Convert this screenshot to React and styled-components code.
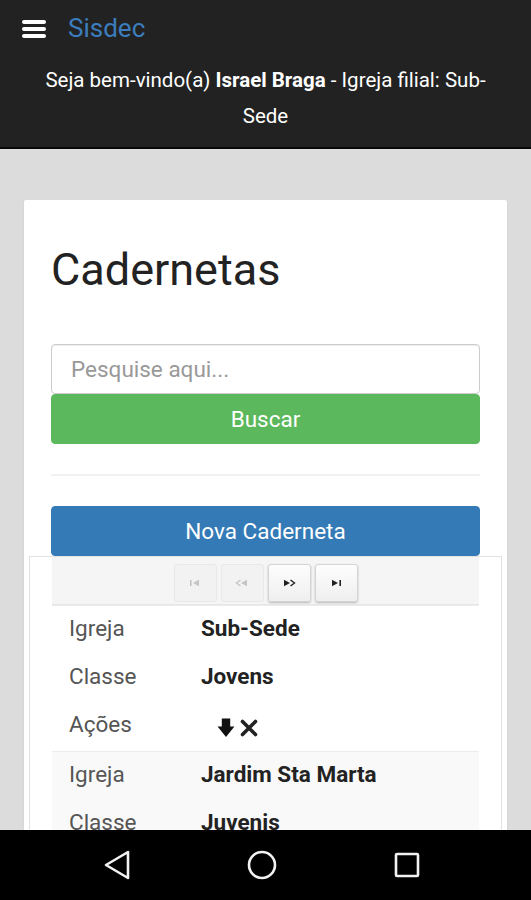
import React from 'react'
import styled, { createGlobalStyle } from 'styled-components'

const GlobalStyle = createGlobalStyle`
  * { box-sizing: border-box; }
  body {
    margin: 0;
    background: #dcdcdc;
    font-family: Roboto, "Noto Sans", "Liberation Sans", sans-serif;
  }
`

const records = [
  { igreja: 'Sub-Sede', classe: 'Jovens' },
  { igreja: 'Jardim Sta Marta', classe: 'Juvenis' },
  { igreja: 'Sub-Sede', classe: 'Adolescentes' },
]

const App = () => {
  return (
    <Screen>
      <GlobalStyle />
      <Header>
        <TopBar>
          <Burger>
            <span />
            <span />
            <span />
          </Burger>
          <Brand>Sisdec</Brand>
        </TopBar>
        <Welcome>
          Seja bem-vindo(a) <b>Israel Braga</b> - Igreja filial: Sub-Sede
        </Welcome>
      </Header>

      <Main>
        <Card>
          <Title>Cadernetas</Title>
          <SearchInput placeholder="Pesquise aqui..." />
          <Button color="#5cb85c">Buscar</Button>
          <Divider />
          <Button color="#337ab7">Nova Caderneta</Button>

          <TableBox>
            <Pager>
              <PageBtn disabled>
                <svg width="12" height="8" viewBox="0 0 12 8">
                  <rect x="1" y="1" width="1.6" height="6" fill="currentColor" />
                  <path d="M4 4 L10 0.8 V7.2 Z" fill="currentColor" />
                </svg>
              </PageBtn>
              <PageBtn disabled>
                <svg width="14" height="8" viewBox="0 0 14 8">
                  <path d="M5.5 1 L1.5 4 L5.5 7" stroke="currentColor" strokeWidth="1.4" fill="none" />
                  <path d="M6 4 L12 0.8 V7.2 Z" fill="currentColor" />
                </svg>
              </PageBtn>
              <PageBtn>
                <svg width="14" height="8" viewBox="0 0 14 8">
                  <path d="M8 4 L2 0.8 V7.2 Z" fill="currentColor" />
                  <path d="M8.5 1 L12.5 4 L8.5 7" stroke="currentColor" strokeWidth="1.4" fill="none" />
                </svg>
              </PageBtn>
              <PageBtn>
                <svg width="12" height="8" viewBox="0 0 12 8">
                  <path d="M8 4 L2 0.8 V7.2 Z" fill="currentColor" />
                  <rect x="9.4" y="1" width="1.6" height="6" fill="currentColor" />
                </svg>
              </PageBtn>
            </Pager>

            {records.map((r, i) => (
              <Record key={i} striped={i % 2 === 1}>
                <Row>
                  <Label>Igreja</Label>
                  <Value>{r.igreja}</Value>
                </Row>
                <Row>
                  <Label>Classe</Label>
                  <Value>{r.classe}</Value>
                </Row>
                <Row>
                  <Label>Ações</Label>
                  <Actions>
                    <svg width="18" height="20" viewBox="0 0 17 19">
                      <path d="M4.5 0.5 H12.5 V8 H16.5 L8.5 18 L0.5 8 H4.5 Z" fill="#111" />
                    </svg>
                    <svg width="20" height="20" viewBox="0 0 20 20">
                      <path d="M3.5 3.5 L16.5 16.5 M16.5 3.5 L3.5 16.5" stroke="#222" strokeWidth="3.6" strokeLinecap="round" />
                    </svg>
                  </Actions>
                </Row>
              </Record>
            ))}
          </TableBox>
        </Card>
      </Main>

      <NavBar>
        <svg width="26" height="30" viewBox="0 0 26 30">
          <path d="M24 2 V28 L2 15 Z" stroke="#f2f2f2" strokeWidth="2.6" fill="none" strokeLinejoin="round" />
        </svg>
        <svg width="30" height="30" viewBox="0 0 30 30">
          <circle cx="15" cy="15" r="13" stroke="#f2f2f2" strokeWidth="2.6" fill="none" />
        </svg>
        <svg width="26" height="26" viewBox="0 0 26 26">
          <rect x="2" y="2" width="22" height="22" rx="1" stroke="#f2f2f2" strokeWidth="2.6" fill="none" />
        </svg>
      </NavBar>
    </Screen>
  )
}

const Screen = styled.div`
  height: 900px;
  display: flex;
  flex-direction: column;
  overflow: hidden;
`

const Header = styled.header`
  background: #222;
  border-bottom: 2px solid #080808;
  height: 149px;
  flex-shrink: 0;
`

const TopBar = styled.div`
  height: 56px;
  display: flex;
  align-items: center;
  padding-left: 22px;
`

const Burger = styled.div`
  width: 24px;
  display: flex;
  flex-direction: column;
  gap: 3px;
  margin-top: 2px;
  span {
    display: block;
    height: 4px;
    border-radius: 2px;
    background: #fff;
  }
`

const Brand = styled.div`
  margin-left: 22px;
  color: #3b7dbd;
  font-size: 26px;
  line-height: 1;
`

const Welcome = styled.div`
  color: #fff;
  font-size: 20.5px;
  line-height: 36px;
  text-align: center;
  padding: 6px 34px 0;
  b {
    font-weight: 700;
  }
`

const Main = styled.main`
  flex: 1;
  overflow: hidden;
  padding: 51px 24px 0;
`

const Card = styled.section`
  background: #fff;
  border-radius: 2px;
  box-shadow: 0 1px 2px rgba(0, 0, 0, 0.08);
  padding: 22px 27px 30px;
`

const Title = styled.h1`
  margin: 22px 0 48px;
  font-size: 45px;
  font-weight: 400;
  line-height: 52px;
  color: #222;
`

const SearchInput = styled.input`
  display: block;
  width: 100%;
  height: 50px;
  border: 1px solid #ccc;
  border-radius: 4px;
  padding: 0 19px;
  font-family: inherit;
  font-size: 22.5px;
  color: #555;
  box-shadow: inset 0 1px 1px rgba(0, 0, 0, 0.075);
  &::placeholder {
    color: #999;
  }
`

const Button = styled.button`
  display: block;
  width: 100%;
  height: 50px;
  border: 1px solid ${({ color }) => color};
  border-radius: 4px;
  background: ${({ color }) => color};
  color: #fff;
  font-family: inherit;
  font-size: 22.5px;
`

const Divider = styled.hr`
  margin: 30px 0 30px;
  border: 0;
  border-top: 2px solid #f2f2f2;
`

const TableBox = styled.div`
  margin: 0 -22px;
  padding: 0 22px;
  border: 1px solid #e2e2e2;
  border-bottom: 0;
`

const Pager = styled.div`
  height: 48px;
  background: #f5f5f5;
  border-bottom: 1px solid #e6e6e6;
  display: flex;
  justify-content: center;
  align-items: center;
  gap: 4px;
  padding-top: 4px;
`

const PageBtn = styled.button`
  width: 43px;
  height: 38px;
  border-radius: 3px;
  display: flex;
  align-items: center;
  justify-content: center;
  padding: 0;
  border: 1px solid ${({ disabled }) => (disabled ? '#e8e8e8' : '#d4d4d4')};
  background: ${({ disabled }) =>
    disabled ? '#f2f2f2' : 'linear-gradient(#fdfdfd, #efefef)'};
  color: ${({ disabled }) => (disabled ? '#c4c4c4' : '#222')};
  box-shadow: ${({ disabled }) => (disabled ? 'none' : '0 1px 2px rgba(0,0,0,0.25)')};
`

const Record = styled.div`
  background: ${({ striped }) => (striped ? '#f9f9f9' : '#fff')};
  border-top: 1px solid #ececec;
  &:first-of-type {
    border-top: 0;
  }
`

const Row = styled.div`
  height: 48.3px;
  display: grid;
  grid-template-columns: 132px 1fr;
  align-items: center;
  padding: 0 0 4px 17px;
  font-size: 22.5px;
  line-height: 1;
`

const Label = styled.span`
  color: #555;
`

const Value = styled.span`
  color: #222;
  font-weight: 700;
`

const Actions = styled.span`
  display: flex;
  align-items: center;
  gap: 4px;
  padding-left: 16px;
  margin-top: 6px;
`

const NavBar = styled.nav`
  height: 70px;
  flex-shrink: 0;
  background: #000;
  display: flex;
  align-items: center;
  gap: 117px;
  padding-left: 104px;
`

export default App
